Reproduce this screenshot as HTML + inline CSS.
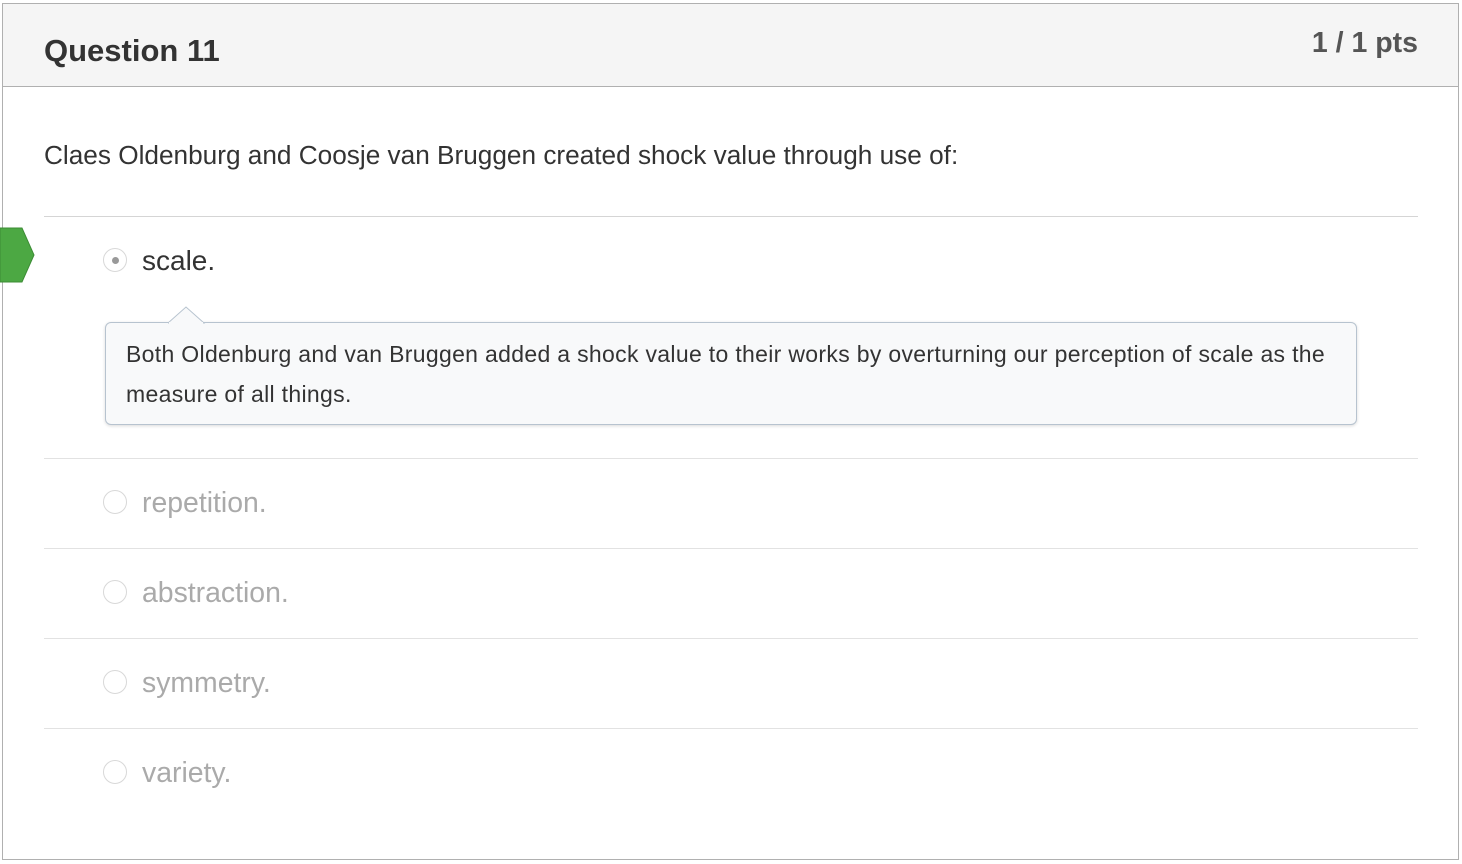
<!DOCTYPE html>
<html><head><style>
body{margin:0;width:1462px;height:864px;background:#fff;font-family:"Liberation Sans",Helvetica,Arial,sans-serif;position:relative;overflow:hidden}
.box{position:absolute;left:2px;top:3px;width:1455px;height:855px;border:1px solid #b0b0b0}
.hdr{position:absolute;left:3px;top:4px;width:1455px;height:82px;background:#f5f5f5;border-bottom:1px solid #b0b0b0}
.t{position:absolute;white-space:nowrap}
.line{position:absolute;left:44px;width:1374px;height:1px;background:#e2e2e2}
.radio{position:absolute;left:103px;width:24px;height:24px;border:1px solid #d8d8d8;border-radius:50%;box-sizing:border-box;background:#fff}
.opt{position:absolute;left:142px;font-size:28.4px;color:#aaa}
</style></head><body>
<div class="box"></div>
<div class="hdr"></div>
<div class="t" style="left:44px;top:33px;font-size:31px;font-weight:bold;color:#333">Question 11</div>
<div class="t" style="right:44px;top:27px;font-size:28.5px;font-weight:bold;color:#555">1 / 1 pts</div>
<div class="t" style="left:44px;top:140px;font-size:26.2px;color:#333">Claes Oldenburg and Coosje van Bruggen created shock value through use of:</div>
<div class="line" style="top:216px;background:#d5d5d5"></div>
<svg style="position:absolute;left:0;top:227px" width="36" height="56"><polygon points="0,1 22,1 34,28 22,55 0,55" fill="#4ca843" stroke="#3c8c35" stroke-width="1"/></svg>
<div class="radio" style="top:248px"><div style="position:absolute;left:8px;top:8px;width:7px;height:7px;border-radius:50%;background:#999"></div></div>
<div class="t" style="left:142px;top:245px;font-size:28px;color:#333">scale.</div>
<div style="position:absolute;left:105px;top:322px;width:1252px;height:103px;box-sizing:border-box;border:1px solid #b7c3cf;border-radius:6px;background:#f8f9fa;box-shadow:0 1px 3px rgba(0,0,0,.15)"></div>
<svg style="position:absolute;left:168px;top:306px" width="40" height="18"><polygon points="0,17 18,1 36,17" fill="#f8f9fa" stroke="#b7c3cf"/><rect x="1" y="16" width="34" height="3" fill="#f8f9fa"/></svg>
<div class="t" style="left:126px;top:334px;font-size:23px;letter-spacing:0.32px;line-height:40px;color:#333">Both Oldenburg and van Bruggen added a shock value to their works by overturning our perception of scale as the<br>measure of all things.</div>
<div class="line" style="top:458px"></div>
<div class="radio" style="top:490px"></div><div class="t opt" style="top:487px">repetition.</div>
<div class="line" style="top:548px"></div>
<div class="radio" style="top:580px"></div><div class="t opt" style="top:577px">abstraction.</div>
<div class="line" style="top:638px"></div>
<div class="radio" style="top:670px"></div><div class="t opt" style="top:667px">symmetry.</div>
<div class="line" style="top:728px"></div>
<div class="radio" style="top:760px"></div><div class="t opt" style="top:757px">variety.</div>
</body></html>
